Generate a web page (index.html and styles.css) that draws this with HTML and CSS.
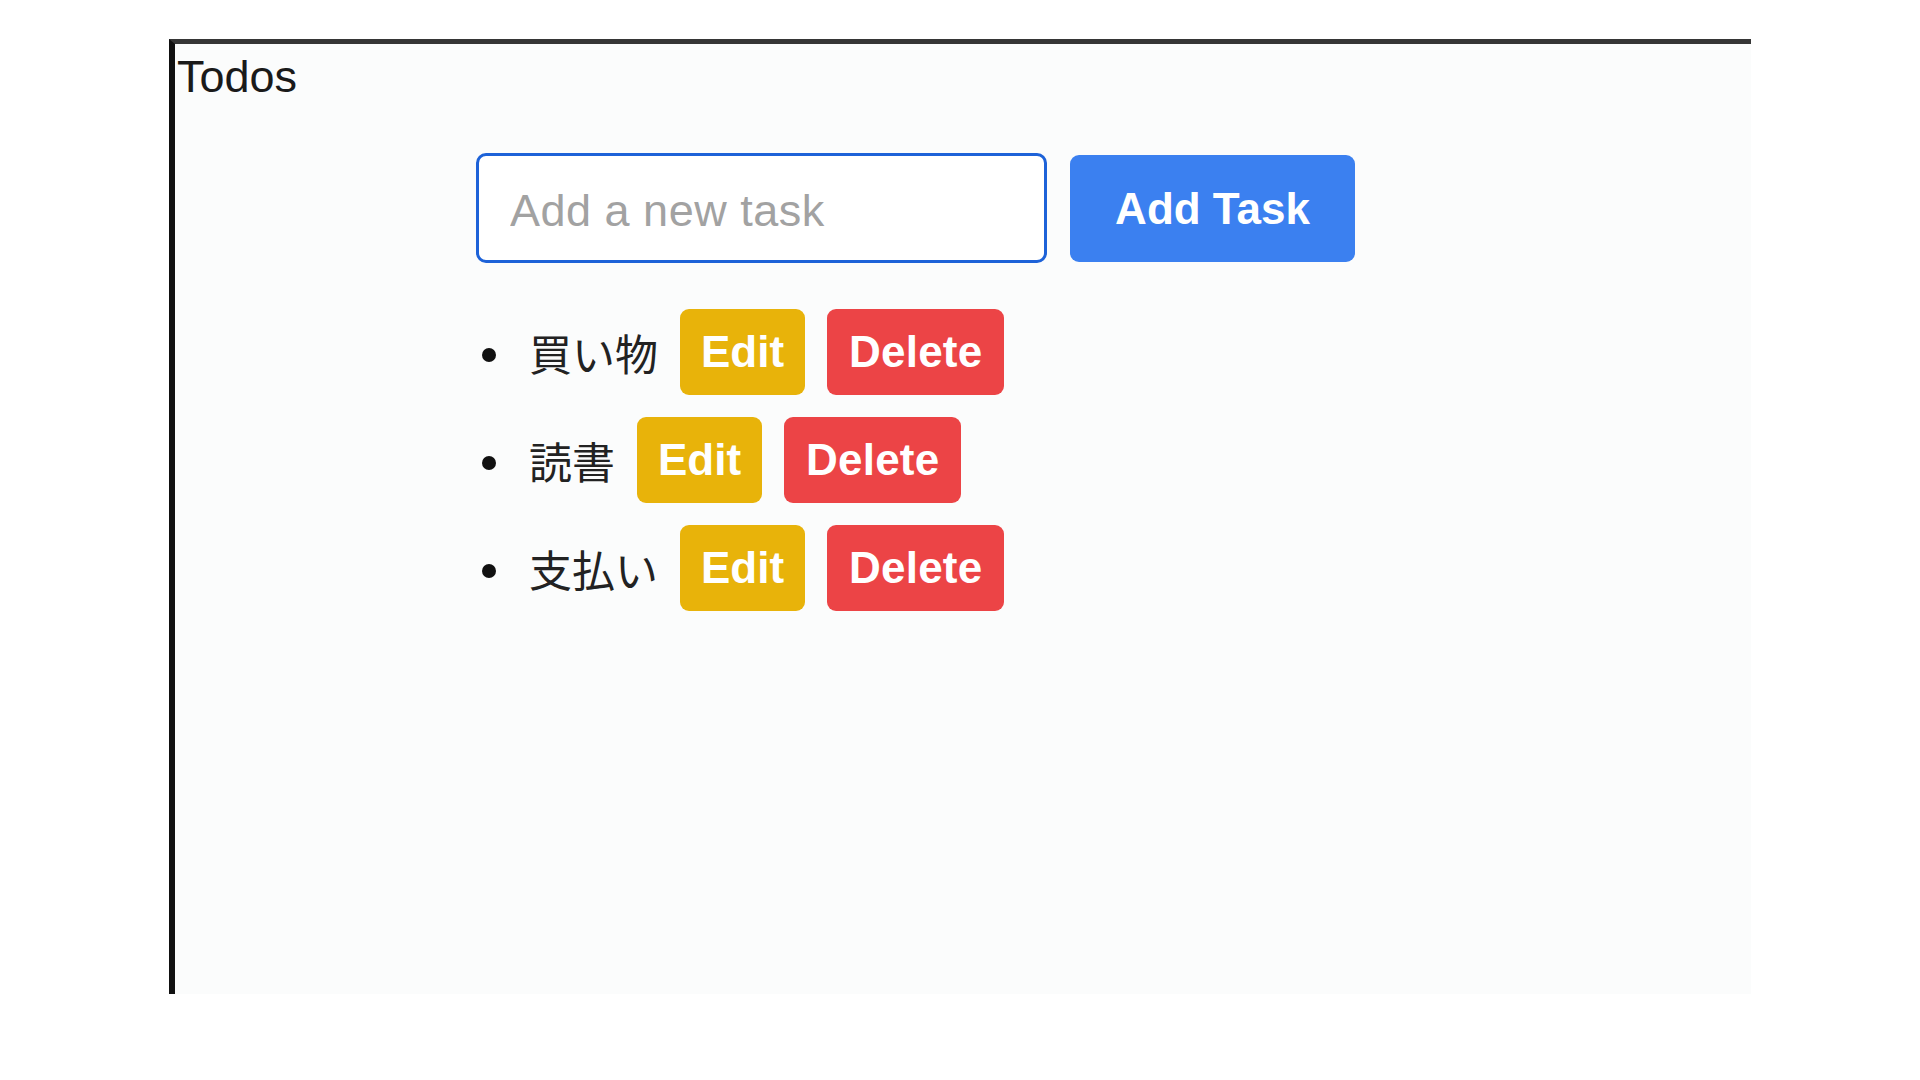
FILE: index.html
```html
<!DOCTYPE html>
<html lang="ja">
<head>
<meta charset="utf-8">
<title>Todos</title>
<link rel="stylesheet" href="styles.css">
</head>
<body>
<div class="frame">
  <div class="title">Todos</div>
  <div class="form">
    <input class="task-input" type="text" placeholder="Add a new task">
    <button class="btn btn-add">Add Task</button>
  </div>
  <ul class="todo-list">
    <li class="todo">
      <span class="bullet"></span>
      <span class="todo-text">買い物</span>
      <button class="btn btn-edit">Edit</button>
      <button class="btn btn-delete">Delete</button>
    </li>
    <li class="todo">
      <span class="bullet"></span>
      <span class="todo-text">読書</span>
      <button class="btn btn-edit">Edit</button>
      <button class="btn btn-delete">Delete</button>
    </li>
    <li class="todo">
      <span class="bullet"></span>
      <span class="todo-text">支払い</span>
      <button class="btn btn-edit">Edit</button>
      <button class="btn btn-delete">Delete</button>
    </li>
  </ul>
</div>
</body>
</html>
```
FILE: styles.css
```css
* { box-sizing: border-box; }
html, body {
  margin: 0;
  padding: 0;
  background: #ffffff;
}
body {
  font-family: "Liberation Sans", Arial, "Noto Sans CJK JP", sans-serif;
  color: #1e1e1e;
}
.frame {
  margin: 39px 0 0 169px;
  width: 1582px;
  height: 955px;
  border-top: 5px solid #363636;
  border-left: 6px solid #111111;
  background: #fbfcfc;
}
.title {
  font-size: 45px;
  line-height: 66px;
  height: 66px;
  padding-left: 2px;
  color: #1a1a1a;
}
.form {
  display: flex;
  margin: 43px 0 0 301px;
}
.task-input {
  width: 571px;
  height: 110px;
  border: 3px solid #1d62d8;
  border-radius: 10px;
  background: #ffffff;
  padding: 5px 31px 0;
  font-family: "Liberation Sans", Arial, sans-serif;
  font-size: 45px;
  letter-spacing: 0.5px;
  color: #1e1e1e;
  outline: none;
}
.task-input::placeholder {
  color: #a2a2a2;
}
.btn {
  border: none;
  border-radius: 9px;
  color: #ffffff;
  font-family: "Liberation Sans", Arial, sans-serif;
  font-weight: bold;
  font-size: 44px;
  cursor: pointer;
}
.btn-add {
  margin: 2px 0 0 23px;
  width: 285px;
  height: 107px;
  background: #3b80f0;
  padding: 0;
}
.todo-list {
  list-style: none;
  margin: 46px 0 0 307px;
  padding: 0;
}
.todo {
  display: flex;
  align-items: center;
  height: 86px;
  margin-bottom: 22px;
}
.bullet {
  width: 14px;
  height: 14px;
  border-radius: 50%;
  background: #111111;
  margin: 6px 33px 0 0;
}
.todo-text {
  font-family: "Noto Sans CJK JP", "Liberation Sans", sans-serif;
  font-size: 43px;
  color: #222222;
  margin-right: 22px;
}
.btn-edit,
.btn-delete {
  height: 86px;
  padding: 0 21px;
}
.btn-edit {
  background: #e8b30a;
  margin-right: 22px;
}
.btn-delete {
  background: #ec4446;
  padding: 0 22px;
  letter-spacing: 0.2px;
}
```
